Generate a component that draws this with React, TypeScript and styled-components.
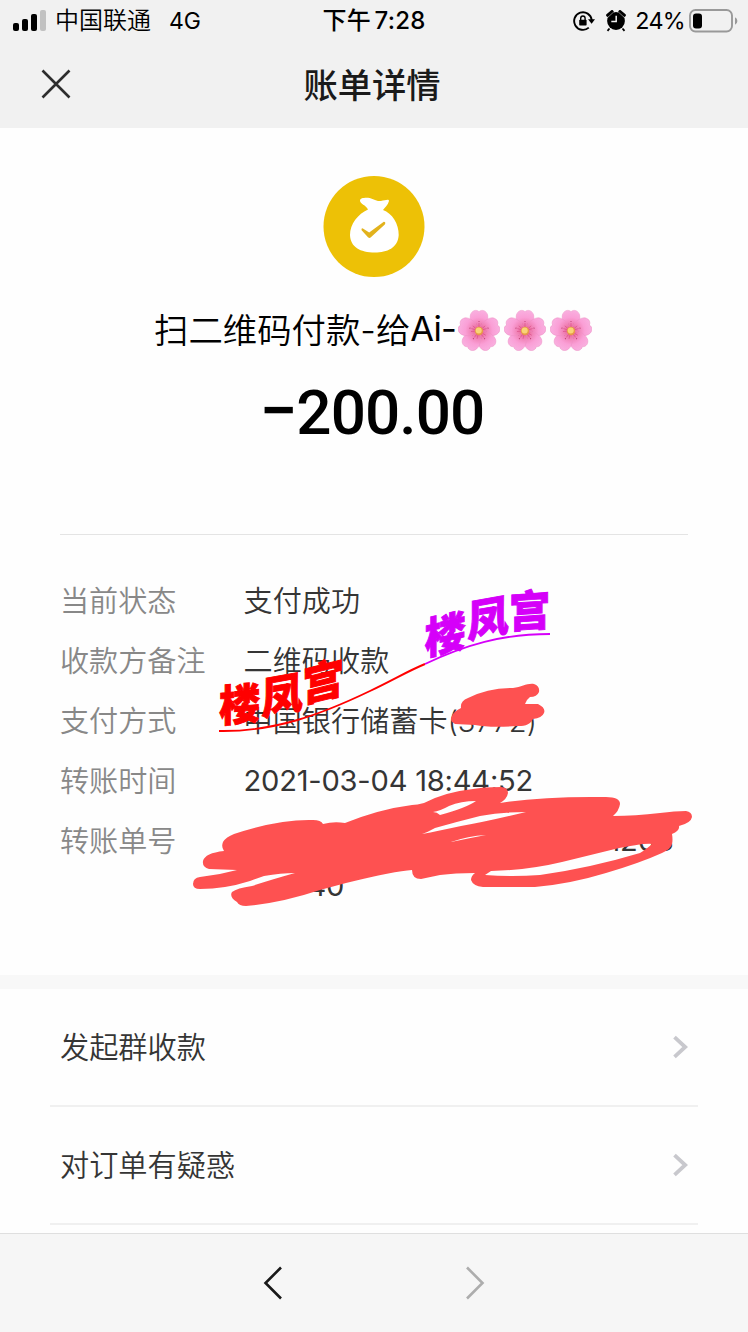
import React from 'react';
import styled, { createGlobalStyle } from 'styled-components';

const Global = createGlobalStyle`
  * { box-sizing: border-box; }
  body { margin: 0; background: #fefefe; }
`;

const Page = styled.div`
  position: relative;
  display: flex;
  flex-direction: column;
  width: 748px;
  height: 1332px;
  overflow: hidden;
  background: #fefefe;
  font-family: Inter, 'Noto Sans CJK SC', sans-serif;
  font-weight: 350;
  color: #000;
`;

const Header = styled.header`
  height: 128px;
  background: #f1f1f1;
  flex: none;
`;

const StatusBar = styled.div`
  display: grid;
  grid-template-columns: 1fr auto 1fr;
  align-items: center;
  height: 40px;
  padding: 0 10px 0 13px;
  font-size: 24px;
  line-height: 40px;
  white-space: nowrap;
`;

const StatusSide = styled.div<{ $end?: boolean }>`
  display: flex;
  align-items: center;
  justify-content: ${(p) => (p.$end ? 'flex-end' : 'flex-start')};
`;

const Carrier = styled.span`
  margin-left: 9px;
  padding-top: 1px;
`;

const Network = styled.span`
  margin-left: 18px;
  padding-top: 1px;
  font-size: 23px;
  font-weight: 400;
`;

const Clock = styled.div`
  padding: 1px 3px 0 0;
  font-weight: 500;
  font-size: 24px;
  word-spacing: -3px;
  letter-spacing: 0.2px;
`;

const Percent = styled.span`
  margin: 0 4px 0 9px;
  padding-top: 1px;
  font-size: 23.3px;
  font-weight: 400;
  letter-spacing: -0.7px;
`;

const NavBar = styled.div`
  display: grid;
  grid-template-columns: 112px 1fr 112px;
  align-items: center;
  height: 88px;
`;

const CloseButton = styled.button`
  display: flex;
  width: 112px;
  justify-content: center;
  padding: 0;
  border: 0;
  background: none;
`;

const NavTitle = styled.h1`
  margin: 0;
  padding: 3px 4px 0 0;
  text-align: center;
  font-size: 34.3px;
  line-height: 48px;
  font-weight: 500;
  color: #1a1a1a;
`;

const Summary = styled.section`
  display: flex;
  flex-direction: column;
  align-items: center;
  height: 407px;
  margin: 0 60px;
  padding-top: 48px;
  border-bottom: 1px solid #e4e4e4;
  flex: none;
`;

const Payee = styled.div`
  display: flex;
  align-items: center;
  height: 50px;
  margin: 25px 2px 0 0;
  font-size: 34.4px;
  white-space: nowrap;
`;

const Latin = styled.span`
  font-weight: 400;
  letter-spacing: -0.8px;
`;

const Flowers = styled.span`
  display: flex;
  gap: 4px;
  margin: 3px 0 0 2px;
`;

const Amount = styled.div`
  margin: 23px 4px 0 0;
  font: 500 62px/74px Roboto, sans-serif;
  letter-spacing: -0.9px;
`;

const Minus = styled.span`
  font-size: 68px;
  line-height: 0;
  letter-spacing: -1.5px;
`;

const Details = styled.dl`
  display: flex;
  flex-direction: column;
  gap: 15px;
  height: 440px;
  margin: 0;
  padding: 44px 60px 0;
  flex: none;
`;

const DetailRow = styled.div`
  display: grid;
  grid-template-columns: 183.5px 1fr;
  font-size: 29.1px;
  line-height: 45px;
  white-space: nowrap;
`;

const Label = styled.dt`
  color: #888;
`;

const Value = styled.dd<{ $number?: boolean }>`
  margin: ${(p) => (p.$number ? '-1px 0 1px' : '0')};
  color: #353535;
  font-weight: ${(p) => (p.$number ? 400 : 350)};
  letter-spacing: ${(p) => (p.$number ? '-0.22px' : '0.07px')};
`;

const NumberLine = styled.div<{ $inset: number }>`
  padding-left: ${(p) => p.$inset}px;
`;

const Divider = styled.div`
  height: 14px;
  background: #f8f8f8;
  flex: none;
`;

const Actions = styled.ul`
  height: 244px;
  margin: 0;
  padding: 0 50px;
  list-style: none;
  flex: none;
`;

const Action = styled.li`
  display: flex;
  align-items: center;
  justify-content: space-between;
  height: 118px;
  padding: 0 10px;
  border-bottom: 2px solid #f0f0f0;
  font-size: 29.2px;
  color: #353535;
`;

const ActionName = styled.span`
  padding-bottom: 5px;
`;

const Toolbar = styled.footer`
  display: flex;
  justify-content: center;
  align-items: center;
  gap: 182px;
  height: 99px;
  border-top: 1px solid #dfdfdf;
  background: #f6f6f6;
  flex: none;
`;

const Overlay = styled.svg`
  position: absolute;
  top: 0;
  left: 0;
  pointer-events: none;
`;

const StampText = styled.text`
  font: 900 42px 'Noto Sans CJK SC', sans-serif;
`;

const Signal = () => (
  <svg width="33" height="22" viewBox="0 0 33 22">
    <rect x="0" y="13" width="6" height="8" rx="2" />
    <rect x="9" y="9" width="6" height="12" rx="2" />
    <rect x="18" y="4" width="6" height="17" rx="2" />
    <rect x="27" y="0" width="6" height="21" rx="2" fill="#c1c1c1" />
  </svg>
);

const RotationLock = () => (
  <svg width="22" height="22" viewBox="0 0 22 22">
    <path d="M15.8 17.6A8.8 8.8 0 1 1 18.7 10" fill="none" stroke="#000" strokeWidth="1.9" />
    <path d="M15 9.2h7L18.6 13.8z" />
    <rect x="6.2" y="9.7" width="7.4" height="5.8" rx=".7" />
    <path d="M7.7 10V8.2a2.2 2.2 0 0 1 4.4 0V10" fill="none" stroke="#000" strokeWidth="1.4" />
  </svg>
);

const AlarmIcon = styled.svg`
  margin-left: 11px;
`;

const Alarm = () => (
  <AlarmIcon width="20" height="22" viewBox="0 0 20 22">
    <circle cx="10" cy="11" r="8.9" />
    <path d="M1.8 5.2L6 1.7M18.2 5.2L14 1.7" stroke="#000" strokeWidth="3.3" strokeLinecap="round" />
    <path d="M3.5 18.5l-2 2.4M16.5 18.5l2 2.4" stroke="#000" strokeWidth="1.8" />
    <path d="M2 7.2L7 2.6M18 7.2L13 2.6" stroke="#f1f1f1" strokeWidth=".5" />
    <path d="M10.2 5.8v5.7H5.3" fill="none" stroke="#f1f1f1" strokeWidth="1.5" />
  </AlarmIcon>
);

const Battery = () => (
  <svg width="49" height="24" viewBox="0 0 49 24">
    <rect x="1" y="1" width="42" height="21.5" rx="5.5" fill="none" stroke="#999" strokeWidth="1.9" />
    <rect x="4" y="4.4" width="9" height="15" rx="3" />
    <path d="M46 8.2q2.4 1.2 2.4 3.8T46 15.8z" fill="#999" />
  </svg>
);

const Badge = styled.svg`
  flex: none;
`;

const MoneyBag = () => (
  <Badge width="102" height="102" viewBox="0 0 102 102">
    <circle cx="51" cy="50.5" r="50.5" fill="#edc106" />
    <path
      d="M45 33.5C43 29 37 28 37 24.5C37 22 41 21.5 45 21.7C50 22 52 25.5 58 25C62 24.4 66 22.6 66 25C65 29 62 31 60 34C69 37 76 48 75.7 59C75 72 64 76.5 52 76.5C37 76.5 27.5 71 27 59C27 48 35 38 45 33.5Z"
      fill="#fff"
    />
    <path d="M39.5 52.3L46.2 56.6L60.8 45.8Q63.2 46 61.8 48.6L47.6 61.6Q46.3 62.4 45 61.2L38.6 54.2Q38 52.4 39.5 52.3Z" fill="#e2b21c" />
  </Badge>
);

const petals = [0, 72, 144, 216, 288];

const Flower = () => (
  <svg width="42" height="42" viewBox="-21 -21 42 42">
    <defs>
      <radialGradient id="petal" gradientUnits="userSpaceOnUse" cx="0" cy="0" r="21">
        <stop offset="0" stopColor="#e2507f" />
        <stop offset=".34" stopColor="#f080b3" />
        <stop offset=".65" stopColor="#fa9fd6" />
        <stop offset="1" stopColor="#f9b0e0" />
      </radialGradient>
    </defs>
    {petals.map((angle) => (
      <g key={angle} transform={`translate(0 1) rotate(${angle})`}>
        <path
          d="M0 0C-5 -2 -10 -10 -8.6 -16C-7.4 -20.4 -2.8 -22 0 -19.3C2.8 -22 7.4 -20.4 8.6 -16C10 -10 5 -2 0 0Z"
          fill="url(#petal)"
          stroke="#ec8fc4"
          strokeWidth=".5"
        />
        <path d="M0-4V-8M-1.5-4L-3-7.5M1.5-4L3-7.5" stroke="#d94d87" strokeWidth=".6" fill="none" />
        <circle cx="0" cy="-9.5" r=".6" fill="#b93e70" />
      </g>
    ))}
    <circle cy="1" r="4.2" fill="#e79a48" />
    <circle cx="-.3" cy=".6" r="3" fill="#f9d476" />
  </svg>
);

const Chevron = () => (
  <svg width="15" height="24" viewBox="0 0 15 24">
    <path d="M1.5 2.2L12.2 12L1.5 21.8" fill="none" stroke="#c8c8cd" strokeWidth="3.8" />
  </svg>
);

const Arrow = ({ back }: { back?: boolean }) => (
  <svg width="20" height="34" viewBox="0 0 20 34">
    <path
      d={back ? 'M18 1.5L2.5 17L18 32.5' : 'M2 1.5L17.5 17L2 32.5'}
      fill="none"
      stroke={back ? '#191919' : '#adadad'}
      strokeWidth="2.6"
    />
  </svg>
);

type Glyph = { char: string; x: number; y: number; slant: number };

const redStamp: Glyph[] = [
  { char: '楼', x: 239.5, y: 704, slant: -5 },
  { char: '凤', x: 282, y: 695, slant: -10 },
  { char: '宫', x: 323, y: 681, slant: -14 },
];

const purpleStamp: Glyph[] = [
  { char: '楼', x: 445, y: 634, slant: -13 },
  { char: '凤', x: 488, y: 618, slant: -10 },
  { char: '宫', x: 529.5, y: 610, slant: -4 },
];

const Stamp = ({ glyphs, color }: { glyphs: Glyph[]; color: string }) => (
  <g fill={color} stroke={color} strokeWidth=".9">
    {glyphs.map((g) => (
      <StampText key={g.char} x="-21" y="16" transform={`translate(${g.x} ${g.y}) skewY(${g.slant}) scale(.98 1.03)`}>
        {g.char}
      </StampText>
    ))}
  </g>
);

const actions = ['发起群收款', '对订单有疑惑'];

export default function App() {
  return (
    <Page>
      <Global />
      <Header>
        <StatusBar>
          <StatusSide>
            <Signal />
            <Carrier>中国联通</Carrier>
            <Network>4G</Network>
          </StatusSide>
          <Clock>下午 7:28</Clock>
          <StatusSide $end>
            <RotationLock />
            <Alarm />
            <Percent>24%</Percent>
            <Battery />
          </StatusSide>
        </StatusBar>
        <NavBar>
          <CloseButton aria-label="关闭">
            <svg width="30" height="30" viewBox="0 0 30 30">
              <path d="M1.5 1.5L28.5 28.5M28.5 1.5L1.5 28.5" stroke="#2d2d2d" strokeWidth="2.6" />
            </svg>
          </CloseButton>
          <NavTitle>账单详情</NavTitle>
        </NavBar>
      </Header>
      <Summary>
        <MoneyBag />
        <Payee>
          扫二维码付款-给<Latin>Ai-</Latin>
          <Flowers>
            <Flower />
            <Flower />
            <Flower />
          </Flowers>
        </Payee>
        <Amount>
          <Minus>−</Minus>200.00
        </Amount>
      </Summary>
      <Details>
        <DetailRow>
          <Label>当前状态</Label>
          <Value>支付成功</Value>
        </DetailRow>
        <DetailRow>
          <Label>收款方备注</Label>
          <Value>二维码收款</Value>
        </DetailRow>
        <DetailRow>
          <Label>支付方式</Label>
          <Value>中国银行储蓄卡(3772)</Value>
        </DetailRow>
        <DetailRow>
          <Label>转账时间</Label>
          <Value $number>2021-03-04 18:44:52</Value>
        </DetailRow>
        <DetailRow>
          <Label>转账单号</Label>
          <Value $number>
            <NumberLine $inset={365}>1208</NumberLine>
            <NumberLine $inset={64}>40</NumberLine>
          </Value>
        </DetailRow>
      </Details>
      <Divider />
      <Actions>
        {actions.map((name) => (
          <Action key={name}>
            <ActionName>{name}</ActionName>
            <Chevron />
          </Action>
        ))}
      </Actions>
      <Toolbar>
        <Arrow back />
        <Arrow />
      </Toolbar>
      <Overlay width="748" height="1332" viewBox="0 0 748 1332">
        <g fill="#fe5151" fillRule="evenodd">
          <path d="M461 708Q460 701 468 698Q488 688 513 688C522 687 527 683 534 684Q540 686 539 692Q537 697 530 697Q527 699 525 704L538 704Q546 708 544 713Q542 718 533 719C530 726 522 726 517 726Q490 728 475 725L455 724Q449 721 452 716Q454 711 461 708Z" />
          <path d="M193 884Q193 878 200 877Q219 875 237 870L209 869Q202 867 203 861Q205 853 224 851Q221 847 223 842Q226 837 234 834Q279 819 313 820Q321 820 323 824Q334 821 345 823Q380 809 412 805Q417 805 424 803Q445 792 473 789Q483 787 501 787Q508 787 508 793Q507 799 500 803Q545 796 606 797Q620 797 620 804Q619 811 613 816Q635 816 660 813Q675 811 686 811Q692 812 692 817Q691 823 679 826Q680 831 672 834Q673 840 672 844Q671 849 662 853Q640 863 606 873Q570 884 535 887H483Q473 886 471 880Q471 876 475 873Q455 873 440 875L421 879Q412 879 412 870Q395 871 346 883L320 890Q281 903 246 906Q239 906 237 902Q229 897 232 892Q237 888 252 886Q270 880 295 873Q281 873 264 876L250 881Q225 889 200 889Q193 889 193 884ZM433 812Q440 811 449 806Q461 801 476 801Q466 808 440 815Q437 812 433 812ZM422 834Q428 832 435 828Q456 822 480 816Q502 812 526 812Q485 822 461 826Q438 831 422 834ZM451 842Q468 836 486 835Q470 838 451 842ZM485 875L491 871Q529 870 562 862L613 849.5Q643 843 652 844Q648 848 640 853Q590 868 540 875Q512 877 485 875Z" />
        </g>
        <path d="M219 731C275 732 322 714 370 691C395 679 408 671 425 664" fill="none" stroke="#f00" strokeWidth="1.9" />
        <path d="M425 664C465 645 502 634 550 634" fill="none" stroke="#d500f9" strokeWidth="1.9" />
        <Stamp glyphs={redStamp} color="#f00" />
        <Stamp glyphs={purpleStamp} color="#d500f9" />
      </Overlay>
    </Page>
  );
}
